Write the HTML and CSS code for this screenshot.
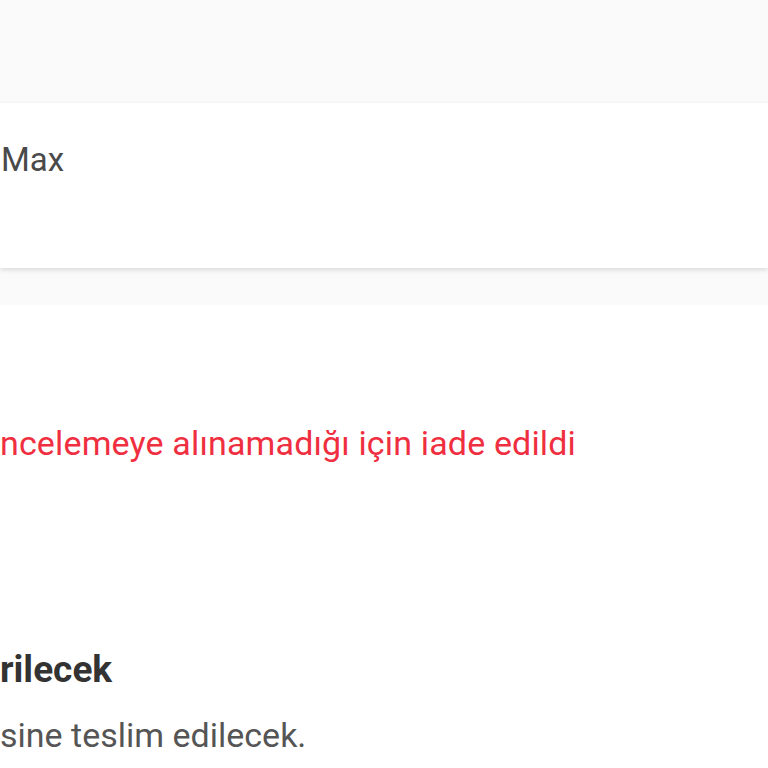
FILE: index.html
```html
<!DOCTYPE html>
<html lang="tr">
<head>
    <meta charset="UTF-8">
    <meta name="viewport" content="width=device-width, initial-scale=1.0">
    <title>Sipariş Detayı</title>
    <link rel="stylesheet" href="styles.css">
</head>
<body>
    <div class="top-area">
        <div class="product-card">
            <div class="product-name">Max</div>
        </div>
    </div>

    <div class="order-status">
        <div class="status-message">ncelemeye alınamadığı için iade edildi</div>
    </div>

    <div class="delivery">
        <div class="delivery-title">rilecek</div>
        <div class="delivery-text">sine teslim edilecek.</div>
    </div>
</body>
</html>
```

FILE: styles.css
```css
body {
    margin: 0;
    font-family: Roboto, "Noto Sans", Arial, sans-serif;
    background: #fff;
    overflow: hidden;
}

.top-area {
    background: #fafafa;
    padding-top: 103px;
    padding-bottom: 37px;
}

.product-card {
    background: white;
    height: 165px;
    box-shadow: 0 2px 5px rgba(0,0,0,0.13);
    box-sizing: border-box;
    padding-top: 37px;
}

.product-name {
    font-size: 33px;
    color: #4a4a4a;
    line-height: 40px;
    padding-left: 1px;
}

.order-status {
    padding-top: 118px;
}

.status-message {
    font-size: 34px;
    line-height: 40px;
    color: #ef2f3f;
    letter-spacing: 0.15px;
}

.delivery {
    padding-top: 185px;
}

.delivery-title {
    font-size: 37px;
    font-weight: bold;
    color: #333;
    line-height: 44px;
}

.delivery-text {
    font-size: 34px;
    color: #555;
    line-height: 40px;
    margin-top: 23px;
}
```
